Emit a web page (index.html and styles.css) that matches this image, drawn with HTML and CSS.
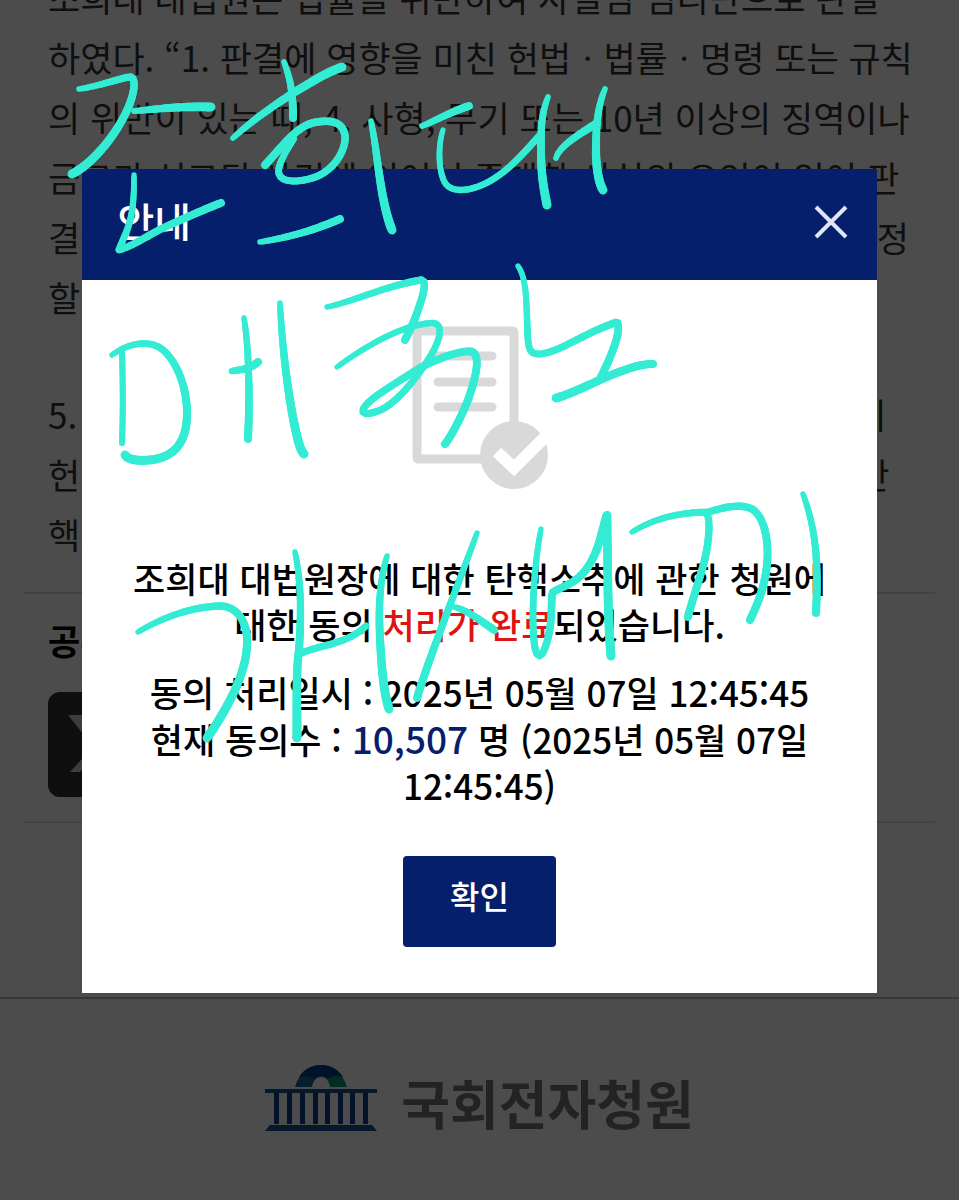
FILE: index.html
```html
<!DOCTYPE html>
<html lang="ko">
<head>
  <meta charset="UTF-8">
  <meta name="viewport" content="width=device-width, initial-scale=1.0">
  <title>국회전자청원</title>
  <link rel="stylesheet" href="styles.css">
</head>
<body>
  <main class="petition">
    <div class="petition-text">
      <p>조희대 대법원은 법률을 위반하여 사실심 심리만으로 판결<br>
      하였다. “1. 판결에 영향을 미친 헌법ㆍ법률ㆍ명령 또는 규칙<br>
      의 위반이 있는 때, 4. 사형, 무기 또는 10년 이상의 징역이나<br>
      금고가 선고된 사건에 있어서 중대한 사실의 오인이 있어 판<br>
      결에 영향을 미친 때 또는 형의 양정이 심히 부당하다고 인정<br>
      할 현저한 사유가 있는 때”</p>
      <p>5. 이에 대법원장 조희대의 행위는 국민주권의 중대한 위기<br>
      헌법과 법률을 위반한 것이므로 조희대 대법원장에 대한 탄<br>
      핵소추를 청원합니다.</p>
    </div>
    <section class="share">
      <h2>공유하기</h2>
      <a class="share-link" href="#" aria-label="X">
        <svg viewBox="0 0 105 105">
          <path d="M20 23h21l45 57H65z M74 23h10L32 80H22z"/>
        </svg>
      </a>
    </section>
  </main>

  <footer class="footer">
    <svg class="footer-logo" viewBox="0 0 112 66">
      <path fill="#1a659b" d="M30 22C34 8 44 0 56 0v12c-5 0-8 4-9 10z"/>
      <path fill="#138f7d" d="M56 0c12 0 22 8 26 22H65c-1-6-4-10-9-10z"/>
      <path fill="#003a8c" d="M34 12C39 4 47 0 56 0s17 4 22 12c-7-2-11-1-15 2-4-4-10-4-14 0-4-3-9-4-15-2z"/>
      <path fill="#15508f" d="M0 24h112v4H0z M5 60h102l5 6H0z"/>
      <path fill="#0a3f86" d="M9 28h5v31H9z M22 28h5v31h-5z M35 28h5v31h-5z M48 28h5v31h-5z M60 28h5v31h-5z M73 28h5v31h-5z M85 28h5v31h-5z M98 28h5v31h-5z"/>
    </svg>
    <span class="footer-name">국회전자청원</span>
  </footer>

  <div class="dim">
    <div class="modal" role="dialog" aria-labelledby="modal-title">
      <div class="modal-header">
        <h1 id="modal-title">안내</h1>
        <button class="modal-close" aria-label="닫기">
          <svg viewBox="0 0 34 34"><path d="M2 2l30 30M32 2L2 32"/></svg>
        </button>
      </div>
      <div class="modal-body">
        <svg class="modal-icon" viewBox="0 0 136 164">
          <rect x="5" y="5" width="97" height="128" rx="1"/>
          <path d="M26 30h54M26 56h54M26 81h54"/>
          <circle cx="102" cy="129" r="34"/>
          <polyline points="85,126 102,142 134,110"/>
        </svg>
        <p>조희대 대법원장에 대한 탄핵소추에 관한 청원에 대한 동의 <em>처리가 완료</em>되었습니다.</p>
        <p>동의 처리일시 : 2025년 05월 07일 12:45:45<br>
        현재 동의수 : <strong>10,507</strong> 명 (2025년 05월 07일 12:45:45)</p>
        <button class="modal-ok">확인</button>
      </div>
    </div>
  </div>

  <svg class="pen" id="pen" viewBox="0 0 959 1200"></svg>

  <script src="pen.js"></script>
</body>
</html>
```
FILE: styles.css
```css
* {
  margin: 0;
  padding: 0;
  box-sizing: border-box;
}

body {
  font-family: 'Noto Sans CJK KR', 'Noto Sans', sans-serif;
  background: #fff;
  color: #333;
  position: relative;
  min-height: 100vh;
  overflow: hidden;
}

.petition {
  padding: 0 24px;
}

.petition-text {
  margin-top: -33px;
  padding: 0 24px 28px;
  font-size: 35px;
  font-weight: 400;
  line-height: 60px;
  white-space: nowrap;
}

.petition-text p + p {
  margin-top: 57px;
}

.share {
  padding: 18px 24px 24px;
  border-top: 2px solid #ddd;
  border-bottom: 2px solid #ddd;
}

.share h2 {
  font-size: 35px;
  font-weight: 700;
  line-height: 56px;
  color: #000;
}

.share-link {
  display: block;
  width: 105px;
  height: 105px;
  margin-top: 24px;
  border-radius: 12px;
  background: #333;
}

.share-link svg {
  display: block;
  fill: #ccc;
}

.footer {
  display: flex;
  justify-content: center;
  gap: 24px;
  margin-top: 174px;
  padding: 66px 24px 70px;
  border-top: 2px solid #bbb;
}

.footer-logo {
  width: 112px;
  height: 66px;
}

.footer-name {
  font-size: 53px;
  font-weight: 700;
  line-height: 74px;
  color: #777;
}

/* Modal */
.dim {
  position: absolute;
  inset: 0;
  padding-top: 169px;
  background: rgba(0, 0, 0, 0.7);
}

.modal {
  width: 83%;
  margin: 0 auto;
  background: #fff;
  color: #000;
}

.modal-header {
  display: flex;
  justify-content: space-between;
  padding: 22px 29px 30px 36px;
  background: #061f6c;
}

.modal-header h1 {
  font-size: 40px;
  font-weight: 500;
  line-height: 59px;
  color: #fff;
}

.modal-close {
  width: 34px;
  height: 34px;
  margin-top: 14px;
  border: none;
  background: none;
  cursor: pointer;
}

.modal-close svg {
  display: block;
  fill: none;
  stroke: #dfe4f7;
  stroke-width: 4;
}

.modal-body {
  display: flex;
  flex-direction: column;
  align-items: center;
  padding: 46px;
  font-size: 35px;
  font-weight: 500;
  line-height: 46px;
  text-align: center;
  word-break: keep-all;
}

.modal-icon {
  width: 136px;
  height: 164px;
  margin-bottom: 65px;
  fill: none;
  stroke: #d9d9d9;
  stroke-width: 9;
  stroke-linecap: round;
}

.modal-icon circle {
  fill: #d9d9d9;
  stroke: none;
}

.modal-icon polyline {
  stroke: #fff;
  stroke-width: 12;
  stroke-linecap: butt;
}

.modal-body p + p {
  margin-top: 22px;
}

.modal-body em {
  font-style: normal;
  color: #e01212;
}

.modal-body strong {
  font-size: 37px;
  font-weight: 500;
  color: #061f6c;
}

.modal-ok {
  margin-top: 48px;
  padding: 16px 47px 28px;
  border: none;
  border-radius: 4px;
  background: #061f6c;
  color: #fff;
  font-family: inherit;
  font-size: 32px;
  font-weight: 500;
  line-height: 47px;
  cursor: pointer;
}

/* Pen strokes over everything */
.pen {
  position: absolute;
  top: 0;
  left: 0;
  width: 100%;
  fill: none;
  stroke: #33ecd3;
  stroke-linecap: round;
  pointer-events: none;
}
```
FILE: pen.js
```javascript
// [path, start width, end width]
const strokes = [
  ['M79,89 C100,86 120,78 130,77 C138,77 134,100 121,122 C108,145 88,166 72,174', 5, 9],
  ['M134,111 C150,110 175,106 211,107', 5, 9],
  ['M134,175 C134,200 133,215 126,233 C121,244 119,250 119,250 C135,245 150,234 165,227 C185,218 205,209 221,203', 5, 8],
  ['M284,62 C291,80 293,95 293,118', 5, 8],
  ['M233,138 C255,118 275,105 293,93 C310,83 325,73 342,67', 5, 9],
  ['M294,139 C283,155 277,168 279,174 C282,183 300,183 318,176 C335,168 346,150 345,136 C343,121 330,120 317,122 C298,125 288,140 265,165', 6, 8],
  ['M260,242 C285,238 310,232 340,219', 5, 8],
  ['M371,121 C378,155 380,200 392,230', 5, 9],
  ['M422,126 C435,121 450,112 469,106', 5, 8],
  ['M443,130 C438,145 438,170 445,183 C452,193 468,191 482,185 C505,175 522,155 540,135', 5, 7],
  ['M548,97 C541,115 541,130 541,150 C541,175 544,190 547,205', 5, 9],
  ['M556,158 C560,146 575,137 597,123', 5, 8],
  ['M605,89 C596,110 596,135 596,155 C597,175 600,185 603,190', 5, 9],

  ['M122,352 C123,385 123,415 122,443', 6, 6],
  ['M112,355 C128,343 150,339 163,350 C180,365 187,393 187,413 C187,435 180,452 160,458 C146,462 128,461 125,455', 5, 9],
  ['M244,318 C249,350 250,395 248,439', 5, 8],
  ['M232,371 C240,370 250,369 258,362', 6, 8],
  ['M280,303 C282,350 290,410 298,440 C300,448 302,452 304,454', 5, 9],
  ['M327,307 C355,301 385,286 421,280 C427,280 424,293 419,307 C415,320 410,330 405,340', 5, 8],
  ['M337,367 C370,343 405,324 433,323 C446,324 438,345 428,360 C415,380 395,405 378,411 C370,414 362,415 363,410 C366,400 395,384 418,369 C440,357 465,349 473,352 C481,358 475,380 468,400 C460,420 450,438 445,444', 5, 8],
  ['M518,266 C528,280 526,310 528,340 C529,352 532,354 540,354 C560,352 580,335 617,322 C622,330 612,355 600,379', 5, 8],
  ['M556,398 C575,393 605,376 625,370 C635,366 645,364 653,364', 9, 8],

  ['M138,632 C165,616 195,606 222,606 C240,608 248,625 247,645 C246,672 230,705 207,738', 5, 9],
  ['M295,552 C302,585 301,620 299,650 C296,670 297,700 297,738', 5, 9],
  ['M298,655 C315,645 345,646 366,626', 7, 7],
  ['M387,556 C377,590 379,625 381,655 C383,685 386,700 389,709', 5, 9],
  ['M477,533 C460,580 430,655 417,698', 5, 8],
  ['M454,607 C465,609 480,620 494,630', 5, 8],
  ['M541,529 C533,570 531,625 535,648 C538,660 542,657 546,645 C554,620 550,600 553,592 C565,585 580,583 592,560 C600,545 603,527 607,514 C608,560 607,610 611,656', 5, 9],
  ['M632,532 C660,515 685,513 706,512 C712,520 708,550 702,570 C696,590 691,605 688,617', 5, 8],
  ['M706,513 C720,508 740,503 752,509 C766,518 769,545 767,565 C764,590 757,605 750,620', 7, 8],
  ['M803,494 C818,535 818,570 816,613', 5, 8]
];

const pen = document.getElementById('pen');
const ns = 'http://www.w3.org/2000/svg';

// Split each stroke into short lines so it can get thicker along the way
strokes.forEach(([d, from, to]) => {
  const path = document.createElementNS(ns, 'path');
  path.setAttribute('d', d);
  const length = path.getTotalLength();
  const steps = Math.ceil(length / 3);
  let last = path.getPointAtLength(0);

  for (let i = 1; i <= steps; i++) {
    const point = path.getPointAtLength(length * i / steps);
    const line = document.createElementNS(ns, 'line');
    line.setAttribute('x1', last.x);
    line.setAttribute('y1', last.y);
    line.setAttribute('x2', point.x);
    line.setAttribute('y2', point.y);
    // widens quickly after the start, like a marker pressed down
    line.setAttribute('stroke-width', from + (to - from) * Math.sqrt(i / steps));
    pen.appendChild(line);
    last = point;
  }
});
```
